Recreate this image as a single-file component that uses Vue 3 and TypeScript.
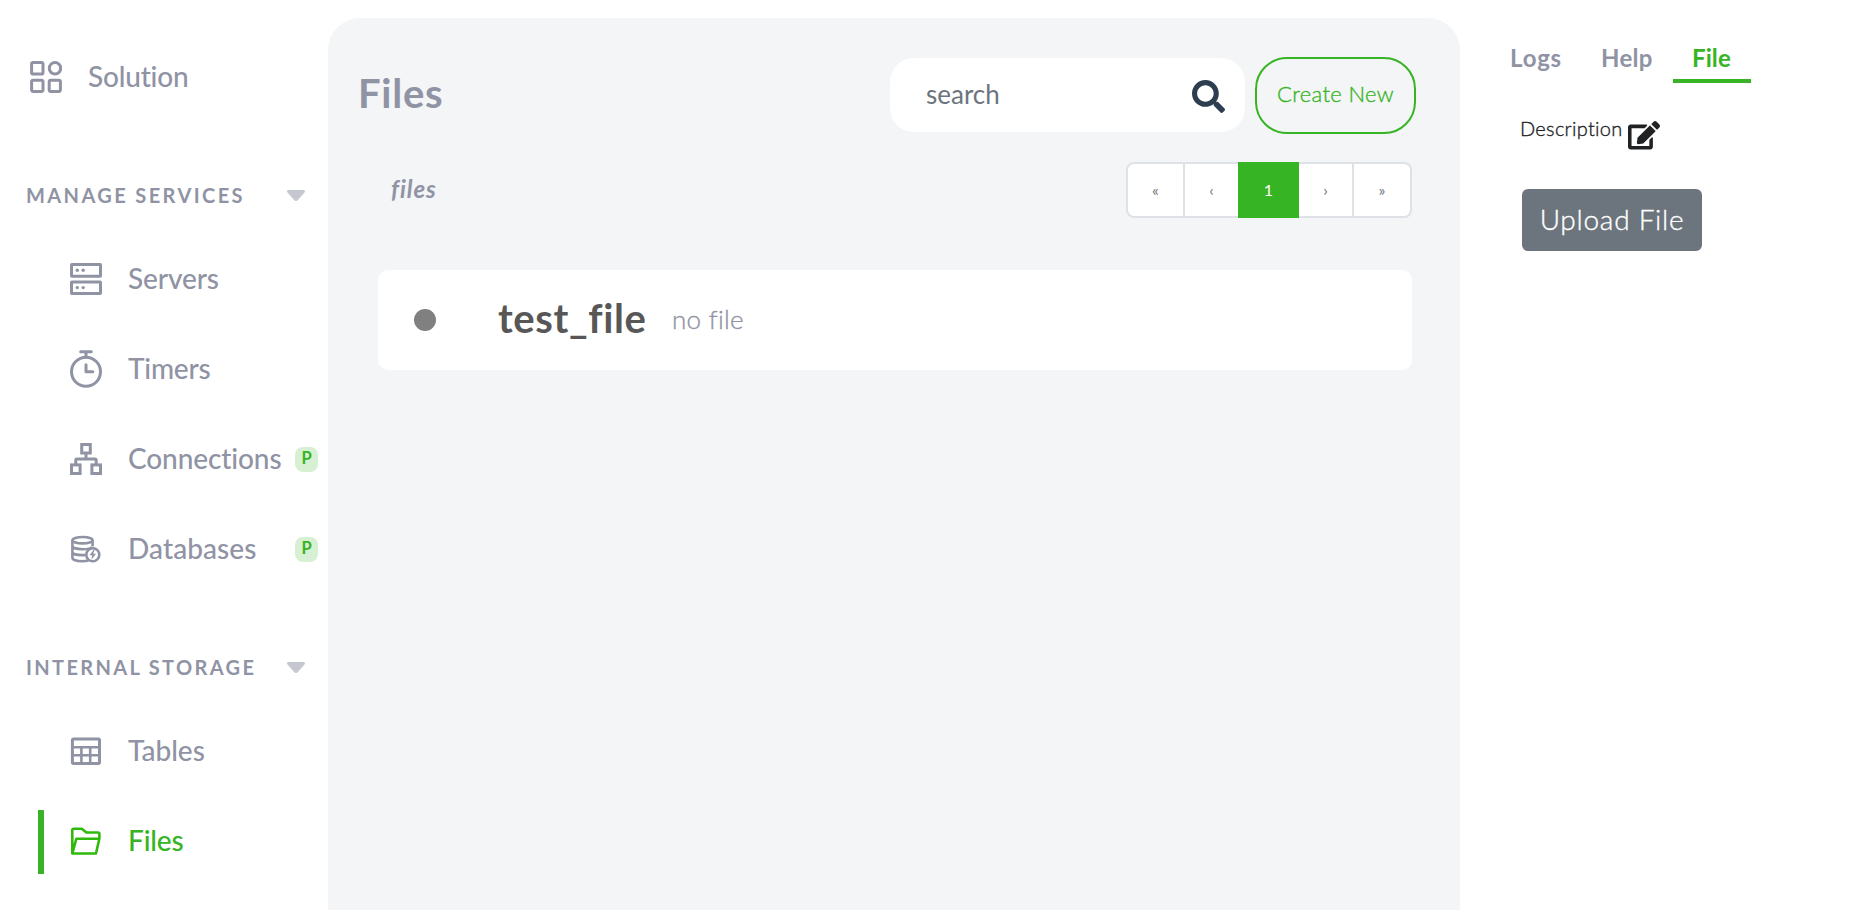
<script setup lang="ts">
import { ref } from 'vue'

type IconName = 'servers' | 'timers' | 'connections' | 'databases' | 'tables' | 'files'

interface NavItem {
  label: string
  icon: IconName
  tracking: number
  premium?: boolean
}

interface NavSection {
  title: string
  tracking: number
  items: NavItem[]
}

const sections: NavSection[] = [
  {
    title: 'Manage Services',
    tracking: 2.4,
    items: [
      { label: 'Servers', icon: 'servers', tracking: -0.1 },
      { label: 'Timers', icon: 'timers', tracking: -0.2 },
      { label: 'Connections', icon: 'connections', tracking: -0.1, premium: true },
      { label: 'Databases', icon: 'databases', tracking: 0.09, premium: true },
    ],
  },
  {
    title: 'Internal Storage',
    tracking: 2.35,
    items: [
      { label: 'Tables', icon: 'tables', tracking: 0 },
      { label: 'Files', icon: 'files', tracking: -0.15 },
    ],
  },
]

const activeItem = ref('Files')
const pages = ['«', '‹', '1', '›', '»']
const currentPage = ref('1')
const tabs = ['Logs', 'Help', 'File']
const activeTab = ref('File')
const query = ref('')
</script>

<template>
  <div class="app">
    <nav class="sidebar">
      <a class="solution">
        <svg class="icon" viewBox="0 0 32 32">
          <rect x="1.6" y="1.6" width="11.4" height="11.4" rx="1.6" />
          <circle cx="25" cy="7.3" r="5.7" />
          <rect x="1.6" y="19.2" width="11.4" height="11.2" rx="1.6" />
          <rect x="19.2" y="19.2" width="11.2" height="11.2" rx="1.6" />
        </svg>
        <span class="label">Solution</span>
      </a>

      <section v-for="section in sections" :key="section.title">
        <header class="section-head">
          <span class="section-title" :style="{ letterSpacing: section.tracking + 'px' }">{{ section.title }}</span>
          <svg class="caret" viewBox="0 0 18 12"><path d="M1.6 0h14.8c1.5 0 2.1 1.5 1.1 2.6L10.7 10.2c-1 1.1-2.4 1.1-3.4 0L.5 2.6C-.5 1.5.1 0 1.6 0z" /></svg>
        </header>
        <a
          v-for="item in section.items"
          :key="item.label"
          class="nav-item"
          :class="{ active: item.label === activeItem }"
          @click="activeItem = item.label"
        >
          <svg v-if="item.icon === 'servers'" class="icon" viewBox="0 0 32 32">
            <rect x="1.5" y="1.5" width="29" height="11.7" rx=".4" />
            <rect x="1.5" y="18.9" width="29" height="11.6" rx=".4" />
            <g class="solid">
              <circle cx="7.3" cy="7.3" r="1.7" /><circle cx="13.2" cy="7.3" r="1.7" />
              <circle cx="7.3" cy="24.6" r="1.7" /><circle cx="13.2" cy="24.6" r="1.7" />
            </g>
          </svg>
          <svg v-else-if="item.icon === 'timers'" class="icon tall" viewBox="0 0 32 38">
            <circle cx="16" cy="21.7" r="14.5" />
            <path d="M10.7 1.8h10.6M16 2v5M16 14.8v6.9h6.8" stroke-linecap="round" stroke-linejoin="round" />
          </svg>
          <svg v-else-if="item.icon === 'connections'" class="icon" viewBox="0 0 32 32">
            <rect x="11.7" y="1.5" width="8.6" height="8.5" />
            <rect x="1.5" y="21.9" width="8.6" height="8.6" />
            <rect x="21.9" y="21.9" width="8.6" height="8.6" />
            <path d="M16 10v6M5.8 21.5v-4.3q0-1.3 1.3-1.3h17.8q1.3 0 1.3 1.3v4.3" />
          </svg>
          <svg v-else-if="item.icon === 'databases'" class="icon fine" viewBox="0 0 32 32">
            <ellipse cx="12.5" cy="7.2" rx="10.1" ry="3.2" />
            <path d="M2.4 7.2v17.6c0 2.1 4.4 3.5 10 3.5 2.4 0 4.4-.2 6-.7M22.6 7.2v6.3M2.4 13c0 2 4.4 3.2 10.1 3.2 4.2 0 7.4-.6 9.2-1.7M2.4 18.9c0 2 4.4 3.2 10.1 3.2h3" />
            <circle cx="22.8" cy="21.7" r="6.5" />
            <path class="solid" d="M23.7 16.7l-4.2 5.500h2.7l-.7 4.500 4.500-5.900h-2.800l1.300-3.800z" />
          </svg>
          <svg v-else-if="item.icon === 'tables'" class="icon" viewBox="0 0 32 32">
            <rect x="2.4" y="3.9" width="27.1" height="24.5" rx="1.2" />
            <path d="M2.3 12.2h27.3M2.3 20.2h27.3M11.4 12.2v16.3M20.2 12.2v16.3" stroke-width="2.6" />
          </svg>
          <svg v-else class="icon folder" viewBox="0 0 32 32">
            <path d="M2.3 28.5V5.2q0-1.5 1.5-1.5h8l4.6 3.800h11.500q1.500 0 1.500 1.500v4.500L26 28.500zL6.300 13.800h23.100" stroke-linejoin="round" />
          </svg>
          <span class="label" :style="{ letterSpacing: item.tracking + 'px' }">{{ item.label }}</span>
          <span v-if="item.premium" class="badge">P</span>
        </a>
      </section>
    </nav>

    <main class="content">
      <header class="toolbar">
        <h1>Files</h1>
        <div class="search">
          <input v-model="query" type="text" placeholder="search" />
          <svg viewBox="0 0 512 512"><path d="M505 442.700L405.300 343c-4.500-4.500-10.600-7-17-7H372c27.600-35.300 44-79.700 44-128C416 93.100 322.900 0 208 0S0 93.100 0 208s93.100 208 208 208c48.300 0 92.700-16.400 128-44v16.300c0 6.400 2.500 12.500 7 17l99.700 99.700c9.400 9.400 24.600 9.400 33.900 0l28.300-28.300c9.400-9.400 9.400-24.600.1-34zM208 336c-70.700 0-128-57.200-128-128 0-70.700 57.200-128 128-128 70.700 0 128 57.200 128 128 0 70.700-57.200 128-128 128z" /></svg>
        </div>
        <button class="create" type="button">Create New</button>
      </header>

      <div class="subbar">
        <span class="crumb">files</span>
        <div class="pagination">
          <button
            v-for="page in pages"
            :key="page"
            type="button"
            :class="{ current: page === currentPage }"
          >{{ page }}</button>
        </div>
      </div>

      <article class="file-card">
        <span class="dot"></span>
        <span class="file-name">test_file</span>
        <span class="file-note">no file</span>
      </article>
    </main>

    <aside class="panel">
      <div class="tabs">
        <button
          v-for="tab in tabs"
          :key="tab"
          type="button"
          :class="[tab.toLowerCase(), { selected: tab === activeTab }]"
          @click="activeTab = tab"
        >{{ tab }}</button>
      </div>
      <div class="description">
        <span>Description</span>
        <svg viewBox="0 0 576 512"><path d="M402.600 83.200l90.200 90.200c3.800 3.800 3.800 10 0 13.800L274.400 405.600l-92.800 10.300c-12.400 1.400-22.900-9.100-21.500-21.500l10.300-92.800L388.800 83.200c3.800-3.800 10-3.800 13.800 0zm162-22.900l-48.800-48.800c-15.200-15.200-39.900-15.200-55.200 0l-35.400 35.400c-3.800 3.800-3.800 10 0 13.800l90.200 90.200c3.800 3.800 10 3.800 13.800 0l35.400-35.400c15.200-15.300 15.200-40 0-55.200zM384 346.200V448H64V128h229.800c3.200 0 6.200-1.300 8.500-3.500l40-40c7.600-7.600 2.200-20.500-8.500-20.500H48C21.500 64 0 85.500 0 112v352c0 26.500 21.500 48 48 48h352c26.500 0 48-21.500 48-48V306.200c0-10.700-12.900-16-20.500-8.500l-40 40c-2.200 2.300-3.500 5.300-3.500 8.500z" /></svg>
      </div>
      <button class="upload" type="button">Upload File</button>
    </aside>
  </div>
</template>

<style>
body {
  background: #fff;
  overflow: hidden;
}
</style>

<style scoped>
.app {
  display: flex;
  height: 910px;
  overflow: hidden;
  font-family: Lato, "Liberation Sans", sans-serif;
  font-variant-ligatures: none;
  color: #8f93a4;
}
button,
input {
  box-sizing: border-box;
  margin: 0;
  padding: 0;
  border: 0;
  background: none;
  font-family: inherit;
  font-variant-ligatures: none;
  color: inherit;
}

/* Sidebar */
.sidebar {
  box-sizing: border-box;
  flex: none;
  width: 328px;
  padding-top: 32px;
}
.solution,
.nav-item {
  position: relative;
  display: flex;
  align-items: center;
  height: 90px;
  font-size: 28px;
  font-weight: 500;
}
.solution {
  padding-left: 30px;
  letter-spacing: -0.2px;
}
.nav-item {
  padding-left: 70px;
}
.label {
  flex: none;
  margin-left: 26px;
  padding-bottom: 2px;
}
.icon {
  flex: none;
  width: 32px;
  height: 32px;
  fill: none;
  stroke: currentColor;
  stroke-width: 3;
}
.icon.tall {
  height: 38px;
}
.icon.fine {
  stroke-width: 2.6;
}
.icon.folder {
  color: #2fba0b;
  stroke-width: 2.6;
}
.icon .solid {
  fill: currentColor;
  stroke: none;
}
.nav-item.active {
  color: #36b424;
}
.nav-item.active::before {
  content: "";
  position: absolute;
  left: 38px;
  top: 14px;
  width: 6px;
  height: 64px;
  background: #36b424;
}
.badge {
  box-sizing: border-box;
  width: 23px;
  height: 25px;
  margin: 0 10px 0 auto;
  border-radius: 8px;
  background: #d7f0d3;
  color: #36b424;
  font-size: 16.5px;
  font-weight: 700;
  line-height: 23px;
  text-align: center;
}
.section-head {
  box-sizing: border-box;
  display: flex;
  align-items: center;
  justify-content: space-between;
  height: 112px;
  padding: 36px 23px 0 26px;
}
.section-title {
  padding-bottom: 3px;
  font-size: 20px;
  font-weight: 700;
  text-transform: uppercase;
  white-space: nowrap;
}
.caret {
  width: 18px;
  height: 12px;
  fill: #c6c8d0;
}

/* Main area */
.content {
  box-sizing: border-box;
  flex: none;
  width: 1132px;
  height: 892px;
  margin-top: 18px;
  padding: 39px 44px 0 30px;
  border-radius: 32px 32px 0 0;
  background: #f3f5f7;
}
.toolbar {
  display: flex;
  align-items: center;
  height: 77px;
}
h1 {
  margin: 0;
  padding-bottom: 6px;
  font-size: 40px;
  font-weight: 700;
  letter-spacing: 0.74px;
}
.search {
  box-sizing: border-box;
  display: flex;
  align-items: center;
  justify-content: space-between;
  width: 355px;
  height: 74px;
  margin: 0 10px 1px auto;
  padding: 0 20px 0 36px;
  border-radius: 24px;
  background: #fff;
}
.search input {
  width: 230px;
  height: 74px;
  padding-bottom: 2px;
  outline: none;
  font-size: 26px;
  letter-spacing: 0;
}
.search input::placeholder {
  color: #6c757d;
  opacity: 1;
}
.search svg {
  width: 33px;
  height: 33px;
  margin-top: 2px;
  fill: #2c3e50;
}
.create,
.upload,
.description span,
.file-note {
  font-weight: 300;
  -webkit-text-stroke: 0.35px currentColor;
}
.create {
  width: 161px;
  height: 77px;
  padding-bottom: 4px;
  border: 2px solid #36b424;
  border-radius: 32px;
  color: #36b424;
  font-size: 22px;
  letter-spacing: 0.36px;
}
.subbar {
  display: flex;
  align-items: center;
  justify-content: space-between;
  height: 56px;
  margin-top: 28px;
  padding: 0 4px 0 33px;
}
.crumb {
  padding-bottom: 3px;
  font-size: 24px;
  font-style: italic;
  font-weight: 700;
  letter-spacing: 0.95px;
}
.pagination {
  display: flex;
  height: 56px;
}
.pagination button {
  width: 53px;
  padding-bottom: 2px;
  border: solid #dee2e6;
  border-width: 2px 0;
  background: #fff;
  color: #6c757d;
  font-size: 16px;
}
.pagination button:first-child {
  width: 59px;
  border-width: 2px;
  border-radius: 8px 0 0 8px;
}
.pagination button:nth-child(4) {
  width: 55px;
  border-right-width: 2px;
}
.pagination button:last-child {
  width: 58px;
  border-right-width: 2px;
  border-radius: 0 8px 8px 0;
}
.pagination button.current {
  width: 61px;
  border-color: #36b424;
  background: #36b424;
  color: #fff;
}
.file-card {
  display: flex;
  align-items: center;
  height: 100px;
  margin: 52px 4px 0 20px;
  border-radius: 10px;
  background: #fff;
}
.dot {
  width: 22px;
  height: 22px;
  margin-left: 36px;
  border-radius: 50%;
  background: #808080;
}
.file-name {
  width: 174px;
  margin-left: 62px;
  padding-bottom: 5px;
  color: #575757;
  font-size: 40px;
  font-weight: 700;
  letter-spacing: 0.6px;
}
.file-note {
  padding-bottom: 3px;
  font-size: 26px;
  letter-spacing: 0.3px;
}

/* Right panel */
.panel {
  flex: 1;
  padding: 35px 0 0 31px;
}
.tabs {
  display: flex;
}
.tabs button {
  width: 91px;
  height: 48px;
  padding: 0 0 4px 19px;
  font-size: 24px;
  font-weight: 700;
  letter-spacing: 0.3px;
  text-align: left;
}
.tabs .logs {
  letter-spacing: 0.8px;
}
.tabs .file {
  width: 78px;
  padding-bottom: 0;
  border-bottom: 4px solid transparent;
  letter-spacing: 0.1px;
}
.tabs .selected {
  border-bottom-color: #36b424;
  color: #36b424;
}
.description {
  display: flex;
  align-items: flex-start;
  height: 28px;
  margin: 33px 0 0 29px;
  color: #212224;
  font-size: 20px;
}
.description span {
  width: 108px;
  line-height: 25px;
  letter-spacing: 0.3px;
}
.description svg {
  width: 32px;
  height: 28.5px;
  margin-top: 5px;
  fill: currentColor;
}
.upload {
  width: 180px;
  height: 62px;
  margin: 45px 0 0 31px;
  padding-bottom: 2px;
  border-radius: 6px;
  background: #6c757d;
  color: #fff;
  font-size: 28px;
  letter-spacing: 0.74px;
}
</style>
